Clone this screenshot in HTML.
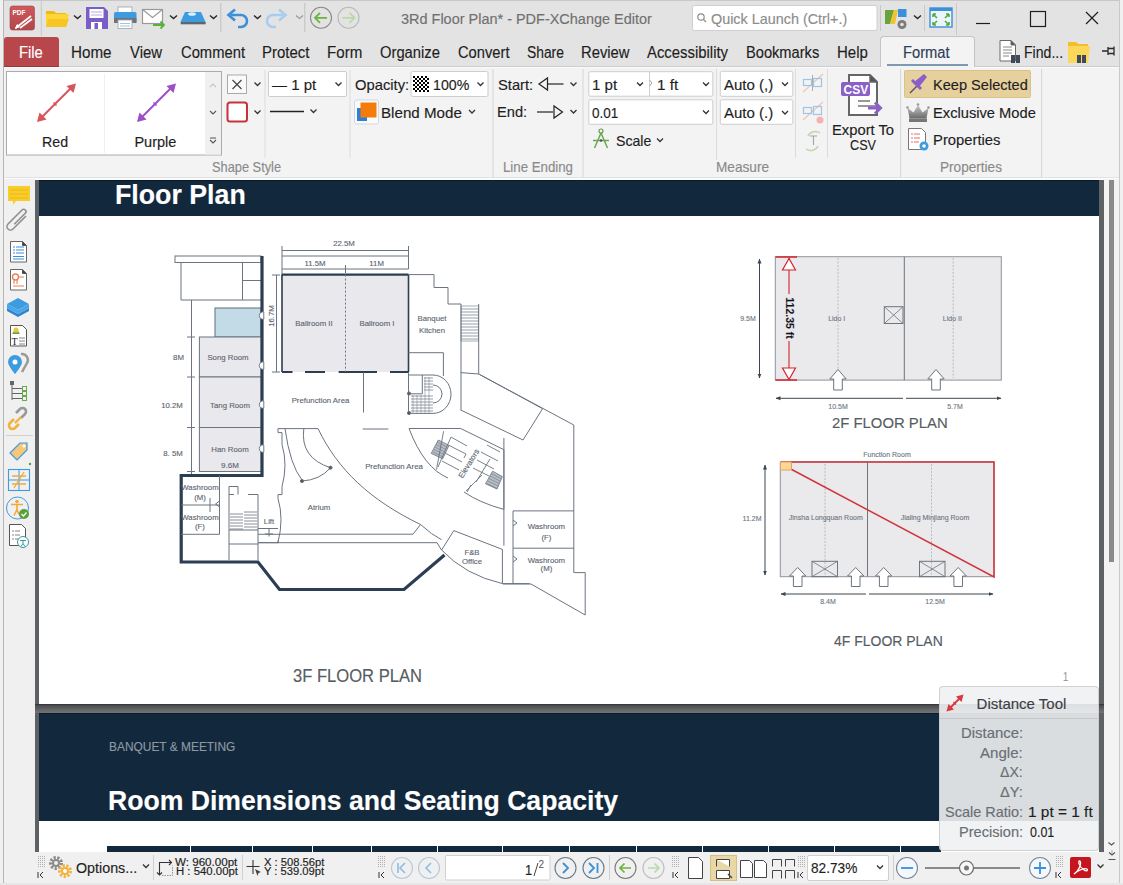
<!DOCTYPE html>
<html><head><meta charset="utf-8">
<style>
html,body{margin:0;padding:0;}
body{width:1123px;height:885px;position:relative;overflow:hidden;background:#f3f3f3;font-family:'Liberation Sans', sans-serif;}
.a{position:absolute;box-sizing:border-box;}
.t{position:absolute;white-space:pre;line-height:1;font-family:'Liberation Sans', sans-serif;-webkit-text-stroke:0.15px currentColor;}
svg{position:absolute;overflow:visible;}
</style></head><body>
<!-- title + tabs bar -->
<div class="a" style="left:0;top:0;width:1123px;height:67px;background:#e3e3e3;"></div>
<div class="a" style="left:0;top:0;width:1123px;height:1px;background:#c8c8c8;"></div>
<div class="a" style="left:0;top:66px;width:1123px;height:1px;background:#cdcdcd;"></div>
<!-- file button -->
<div class="a" style="left:4px;top:37px;width:55px;height:30px;background:#b7474b;border-radius:3px 3px 0 0;border-bottom:1.5px solid #8e3b3f;"></div>
<!-- format tab -->
<div class="a" style="left:880px;top:36px;width:95px;height:32px;background:#f3f3f3;border:1px solid #c4c4c4;border-bottom:none;border-radius:4px 4px 0 0;"></div>
<div class="a" style="left:887px;top:64px;width:81px;height:2px;background:#8099b3;"></div>
<!-- ribbon -->
<div class="a" style="left:0;top:67px;width:1123px;height:1px;background:#fafafa;"></div>
<div class="a" style="left:881px;top:67px;width:93px;height:1px;background:#f3f3f3;"></div>
<div class="a" style="left:0;top:68px;width:1123px;height:111px;background:#f3f3f3;"></div>
<div class="a" style="left:0;top:177px;width:1123px;height:1px;background:#e2e2e2;"></div><div class="a" style="left:0;top:178px;width:1123px;height:2px;background:#fbfbfb;"></div>
<!-- window borders -->
<div class="a" style="left:3px;top:0;width:1px;height:885px;background:#b5b5b5;"></div>
<div class="a" style="left:1119px;top:0;width:1px;height:885px;background:#c9c9c9;"></div>
<div class="a" style="left:0;top:0;width:3px;height:885px;background:#f0f0f0;"></div>
<div class="a" style="left:1120px;top:0;width:3px;height:885px;background:#f0f0f0;"></div>
<!-- left sidebar -->
<div class="a" style="left:4px;top:179px;width:31px;height:673px;background:#f0f0f0;"></div>
<div class="a" style="left:6px;top:435px;width:27px;height:1px;background:#d0d0d0;"></div>
<!-- view background -->
<div class="a" style="left:35px;top:180px;width:69px;height:672px;background:#5f6265;"></div>
<div class="a" style="left:35px;top:180px;width:1069px;height:672px;background:#5f6265;"></div>
<!-- scrollbar -->
<div class="a" style="left:1104px;top:179px;width:15px;height:673px;background:#f3f3f3;"></div>
<div class="a" style="left:1109px;top:180px;width:5px;height:382px;background:#8a8a8a;"></div>
<!-- page 1 -->
<div class="a" style="left:39px;top:180px;width:1060px;height:524px;background:#ffffff;"></div>
<div class="a" style="left:39px;top:180px;width:1060px;height:36px;background:#12283c;border-top:1px solid #0c1b29;"></div>
<div class="a" style="left:35px;top:704px;width:1069px;height:9px;background:linear-gradient(#383838 0,#383838 1px,#4a4d51 1.5px,#6c6c6c 7px,#6f7276 100%);"></div>
<!-- page 2 -->
<div class="a" style="left:39px;top:713px;width:1060px;height:139px;background:#ffffff;"></div>
<div class="a" style="left:39px;top:713px;width:1060px;height:108px;background:#12283c;border-top:1px solid #0e1c2a;"></div>
<div class="a" style="left:107px;top:846px;width:834px;height:6px;background:#12283c;"></div>
<!-- status bar -->
<div class="a" style="left:4px;top:852px;width:1115px;height:31px;background:#f0f0f0;"></div>
<div class="a" style="left:0;top:883px;width:1123px;height:2px;background:#e6e6e6;"></div>
<!-- app logo -->
<svg style="left:0;top:0" width="1123" height="67" viewBox="0 0 1123 67">
  <defs>
    <linearGradient id="lg1" x1="0" y1="0" x2="0" y2="1"><stop offset="0" stop-color="#d0575c"/><stop offset="1" stop-color="#b0474c"/></linearGradient>
  </defs>
  <rect x="10" y="6" width="24.5" height="24" rx="2.5" fill="url(#lg1)" stroke="#a34247" stroke-width="0.6"/>
  <text x="12.5" y="15" font-family="Liberation Sans" font-weight="bold" font-size="6.5" fill="#fff">PDF</text>
  <path d="M17 27 L31 16 M20 28 L32 19 M15.5 28.5 L18 25" stroke="#fff" stroke-width="1.6" fill="none"/>
  <path d="M15 29 l2 -5 l3 3 z" fill="#fff"/>
  <line x1="41.3" y1="1" x2="41.3" y2="36" stroke="#c7c7c7" stroke-width="1"/>
  <!-- folder -->
  <path d="M46 11 h8 l2 2 h10 v3 h-20 z" fill="#f0bb10"/>
  <path d="M46 14 h21 l2 0 l-3 13 h-20 z" fill="#fcd536"/>
  <path d="M48 19 h21 l-3 8 h-20 z" fill="#f7c622"/>
  <path d="M74 15.5 l3.5 3 l3.5 -3" stroke="#2a2a2a" stroke-width="1.5" fill="none"/>
  <!-- save -->
  <path d="M86 7 h18 l4 4 v18 h-22 z" fill="#7a5ec6"/>
  <rect x="89.5" y="9" width="14" height="9" fill="#fff"/>
  <path d="M91 12 h11 M91 15 h11" stroke="#b9a8e6" stroke-width="1"/>
  <rect x="91" y="22" width="11" height="7" fill="#fff"/>
  <rect x="94.5" y="23" width="3.5" height="6" fill="#7a5ec6"/>
  <!-- print -->
  <rect x="118" y="7" width="14" height="6" fill="#ffffff" stroke="#9aa3ad" stroke-width="0.8"/>
  <rect x="114" y="12" width="22.5" height="10" rx="1.5" fill="#3d9be0"/>
  <rect x="114" y="18" width="22.5" height="5" fill="#6d747c"/>
  <rect x="118" y="20" width="14" height="8.5" fill="#fff" stroke="#9aa3ad" stroke-width="0.8"/>
  <path d="M120 23.5 h10 M120 26 h10" stroke="#8fb6dc" stroke-width="0.8"/>
  <!-- mail -->
  <rect x="142.5" y="9.5" width="20" height="14" fill="#fff" stroke="#9a9a9a" stroke-width="1.2"/>
  <path d="M142.5 9.5 l10 8 l10 -8" stroke="#9a9a9a" stroke-width="1.2" fill="none"/>
  <path d="M153 25 h11 M160.5 21.5 l3.5 3.5 l-3.5 3.5" stroke="#58b13c" stroke-width="1.8" fill="none"/>
  <path d="M170 15.5 l3.5 3 l3.5 -3" stroke="#2a2a2a" stroke-width="1.5" fill="none"/>
  <!-- scanner -->
  <path d="M185 12 h16 l4.5 10 h-25 z" fill="#3d9be0"/>
  <ellipse cx="192" cy="14" rx="4" ry="1.8" fill="#d8efff"/>
  <rect x="180.7" y="22" width="25" height="2.3" fill="#5c6670"/>
  <path d="M210 15.5 l3.5 3 l3.5 -3" stroke="#2a2a2a" stroke-width="1.5" fill="none"/>
  <line x1="220.8" y1="3" x2="220.8" y2="32" stroke="#c0c0c0" stroke-width="1"/>
  <!-- undo -->
  <path d="M231 15 h10 a6 6 0 0 1 0 12 h-3" stroke="#3b8fdb" stroke-width="2.6" fill="none"/>
  <path d="M235 9.5 l-6.5 5.5 l6.5 5.5" stroke="#3b8fdb" stroke-width="2.6" fill="none"/>
  <path d="M254 15.5 l3.5 3 l3.5 -3" stroke="#2a2a2a" stroke-width="1.5" fill="none"/>
  <!-- redo -->
  <path d="M283 15 h-10 a6 6 0 0 0 0 12 h3" stroke="#a9cdef" stroke-width="2.6" fill="none"/>
  <path d="M279 9.5 l6.5 5.5 l-6.5 5.5" stroke="#a9cdef" stroke-width="2.6" fill="none"/>
  <path d="M296 15.5 l3.5 3 l3.5 -3" stroke="#9a9a9a" stroke-width="1.3" fill="none"/>
  <line x1="304.8" y1="3" x2="304.8" y2="32" stroke="#c0c0c0" stroke-width="1"/>
  <!-- nav circles -->
  <circle cx="321" cy="17.8" r="10.5" fill="none" stroke="#8a8a8a" stroke-width="1.1"/>
  <path d="M315 17.8 h12 M320 12.8 l-5 5 l5 5" stroke="#6cb33f" stroke-width="1.8" fill="none"/>
  <circle cx="348.5" cy="17.8" r="10.5" fill="none" stroke="#b9b9b9" stroke-width="1.1"/>
  <path d="M342.5 17.8 h12 M349.5 12.8 l5 5 l-5 5" stroke="#bcd8a8" stroke-width="1.8" fill="none"/>
  <!-- quick launch box -->
  <rect x="692.5" y="5.5" width="184.5" height="25" rx="2" fill="#ffffff" stroke="#cfcfcf" stroke-width="1"/>
  <circle cx="701" cy="17" r="3.2" fill="none" stroke="#8c8c8c" stroke-width="1.2"/>
  <path d="M703.3 19.3 l2.8 2.8" stroke="#8c8c8c" stroke-width="1.3"/>
  <line x1="880.5" y1="5" x2="880.5" y2="31" stroke="#c9c9c9" stroke-width="1"/>
  <!-- apps icon -->
  <path d="M885 10 h9 l-4 14 h-5 z" fill="#6aa33c"/>
  <path d="M894 10 h4 l-3 14 h-5 z" fill="#f2c331"/>
  <rect x="898" y="9" width="8.5" height="8" fill="#3a8fde"/>
  <circle cx="902" cy="24.5" r="4.5" fill="#7b7b7b"/>
  <circle cx="902" cy="24.5" r="1.8" fill="#e3e3e3"/>
  <path d="M914 15.5 l3.5 3 l3.5 -3" stroke="#2a2a2a" stroke-width="1.5" fill="none"/>
  <line x1="924.5" y1="5" x2="924.5" y2="31" stroke="#c9c9c9" stroke-width="1"/>
  <!-- fullscreen -->
  <rect x="930" y="8" width="22" height="19" fill="#eaf4fb" stroke="#3b8fdb" stroke-width="1.4"/>
  <rect x="930" y="8" width="22" height="3" fill="#3b8fdb"/>
  <path d="M933 14 l4 4 M933 14 h3 M933 14 v3 M949 14 l-4 4 M949 14 h-3 M949 14 v3 M933 25 l4 -4 M933 25 h3 M933 25 v-3 M949 25 l-4 -4 M949 25 h-3 M949 25 v-3" stroke="#5aa83a" stroke-width="1.6" fill="none"/>
  <line x1="956.5" y1="3" x2="956.5" y2="35" stroke="#c9c9c9" stroke-width="1"/>
  <!-- window controls -->
  <path d="M976 23.5 h14" stroke="#1e1e1e" stroke-width="1.2"/>
  <rect x="1030.5" y="11.5" width="15" height="15" fill="none" stroke="#1e1e1e" stroke-width="1.2"/>
  <path d="M1086 12 l12 12 M1098 12 l-12 12" stroke="#1e1e1e" stroke-width="1.2"/>
  <!-- find icon -->
  <path d="M1000 40.5 h11 l4.5 4.5 v16 h-15.5 z" fill="#fff" stroke="#6a6a6a" stroke-width="1"/>
  <path d="M1003 47 h9 M1003 50 h9 M1003 53 h9 M1003 56 h6" stroke="#7a7a7a" stroke-width="0.9"/>
  <path d="M1011 40.5 v4.5 h4.5" fill="#555" stroke="#6a6a6a" stroke-width="1"/>
  <rect x="1011" y="55" width="4" height="8" fill="#3e4a5a"/><rect x="1016" y="55" width="4" height="8" fill="#3e4a5a"/>
  <!-- folder find -->
  <path d="M1068 42 h8 l2 2 h10 v19 h-20 z" fill="#f3be2a"/>
  <path d="M1068 46 h22 l-2 17 h-20 z" fill="#fbd85a"/>
  <rect x="1077" y="55" width="4" height="8" fill="#3e4a5a"/><rect x="1082" y="55" width="4" height="8" fill="#3e4a5a"/>
  <!-- pin -->
  <path d="M1102 51 h6 M1108 47 v8 M1108 48.5 h6 v5 h-6 M1114 46.5 v9" stroke="#2a2a2a" stroke-width="1.3" fill="none"/>
</svg>
<svg style="left:0;top:67px" width="1123" height="112" viewBox="0 67 1123 112">
  <!-- gallery box -->
  <rect x="6.5" y="71.5" width="215" height="83.5" fill="#ffffff" stroke="#ababab" stroke-width="1"/>
  <rect x="205" y="72" width="16" height="82.5" fill="#f0f0f0"/>
  <line x1="104.5" y1="74" x2="104.5" y2="153" stroke="#f0f0f0" stroke-width="1"/>
  <path d="M210 87 l3 -3 l3 3" stroke="#c5c5c5" stroke-width="1.1" fill="none"/>
  <path d="M210 111 l3 3 l3 -3" stroke="#555" stroke-width="1.1" fill="none"/>
  <path d="M210 138 h6 M210 140 l3 3 l3 -3" stroke="#555" stroke-width="1.1" fill="none"/>
  <!-- red arrow -->
  <path d="M41 118 L72 87" stroke="#d9545a" stroke-width="2"/>
  <path d="M37 122 l9.5 -2.5 l-7 -7 z" fill="#d9545a"/>
  <path d="M76 83.5 l-9.5 2.5 l7 7 z" fill="#d9545a"/>
  <path d="M53.5 102.5 l3 3" stroke="#d9545a" stroke-width="1.6"/>
  <!-- purple arrow -->
  <path d="M141 118 L172 87" stroke="#9b4fc8" stroke-width="2"/>
  <path d="M137 122 l9.5 -2.5 l-7 -7 z" fill="#9b4fc8"/>
  <path d="M176 83.5 l-9.5 2.5 l7 7 z" fill="#9b4fc8"/>
  <path d="M153.5 102.5 l3 3" stroke="#9b4fc8" stroke-width="1.6"/>
  <!-- X button & red square -->
  <rect x="227.5" y="75" width="19" height="18.5" fill="#fafafa" stroke="#a9a9a9" stroke-width="1"/>
  <path d="M232.5 80 l9 9 M241.5 80 l-9 9" stroke="#444" stroke-width="1.2"/>
  <rect x="227.5" y="102.5" width="19.5" height="19" rx="2.5" fill="#fff" stroke="#c8333b" stroke-width="2"/>
  <path d="M254.5 82.5 l3 3 l3 -3 M254.5 110.5 l3 3 l3 -3" stroke="#333" stroke-width="1.3" fill="none"/>
  <line x1="265" y1="70" x2="265" y2="158" stroke="#dcdcdc" stroke-width="1"/>
  <!-- line width combo -->
  <rect x="268.5" y="71.5" width="78" height="25" rx="1.5" fill="#fff" stroke="#cdcdcd" stroke-width="1"/>
  <path d="M335.5 82.5 l3 3 l3 -3" stroke="#333" stroke-width="1.3" fill="none"/>
  <path d="M270 111.5 h34" stroke="#222" stroke-width="1.3"/>
  <path d="M310.5 109.5 l3 3 l3 -3" stroke="#333" stroke-width="1.3" fill="none"/>
  <line x1="350" y1="70" x2="350" y2="158" stroke="#dcdcdc" stroke-width="1"/>
  <!-- opacity combo -->
  <rect x="411" y="71.5" width="77" height="25" rx="1.5" fill="#fff" stroke="#cdcdcd" stroke-width="1"/>
  <path d="M477.5 82.5 l3 3 l3 -3 M469 110 l3 3 l3 -3" stroke="#333" stroke-width="1.3" fill="none"/>
  <!-- blend icon -->
  <rect x="354.5" y="100" width="24" height="24" rx="2" fill="#fafafa" stroke="#cfd7df" stroke-width="1"/>
  <rect x="357" y="108" width="10" height="13" fill="#2f7fd6"/>
  <rect x="360.5" y="102.5" width="16" height="15" fill="#f57c0a"/>
  <line x1="493" y1="69" x2="493" y2="178" stroke="#d6d6d6" stroke-width="1"/>
  <!-- line ending -->
  <path d="M539 84 l8.5 -6 v12 z" fill="none" stroke="#222" stroke-width="1.2"/>
  <path d="M547.5 84 h16" stroke="#222" stroke-width="1.2"/>
  <path d="M570.5 82.5 l3 3 l3 -3 M570.5 110 l3 3 l3 -3" stroke="#333" stroke-width="1.3" fill="none"/>
  <path d="M537 112 h16" stroke="#222" stroke-width="1.2"/>
  <path d="M562.5 112 l-8.5 -6 v12 z" fill="none" stroke="#222" stroke-width="1.2"/>
  <line x1="583" y1="69" x2="583" y2="178" stroke="#d6d6d6" stroke-width="1"/>
  <!-- measure combos -->
  <rect x="588.8" y="71.7" width="124" height="24.5" rx="1.5" fill="#fff" stroke="#cdcdcd" stroke-width="1"/>
  <path d="M649.5 72 v24" stroke="#d0d0d0" stroke-width="1"/>
  <path d="M649.5 80 l2.5 3 l-2.5 3" stroke="#999" stroke-width="0.9" fill="none"/>
  <path d="M637 82.5 l3 3 l3 -3 M703 82.5 l3 3 l3 -3" stroke="#333" stroke-width="1.3" fill="none"/>
  <rect x="588.8" y="99.8" width="124" height="24.5" rx="1.5" fill="#fff" stroke="#cdcdcd" stroke-width="1"/>
  <path d="M703 110.5 l3 3 l3 -3" stroke="#333" stroke-width="1.3" fill="none"/>
  <!-- scale icon -->
  <circle cx="601" cy="131" r="2" fill="none" stroke="#5a9a3c" stroke-width="1.1"/>
  <path d="M601 133 L594.5 148 M601 133 L607.5 148 M593 140.5 h16" stroke="#6aa84f" stroke-width="1.5" fill="none"/>
  <circle cx="601" cy="140.5" r="1.3" fill="#555"/>
  <path d="M657 138.5 l3 3 l3 -3" stroke="#333" stroke-width="1.3" fill="none"/>
  <line x1="716.5" y1="69" x2="716.5" y2="160" stroke="#dcdcdc" stroke-width="1"/>
  <!-- auto combos -->
  <rect x="720.3" y="71.3" width="72.5" height="25" rx="1.5" fill="#fff" stroke="#cdcdcd" stroke-width="1"/>
  <rect x="720.3" y="99.8" width="72.5" height="24.5" rx="1.5" fill="#fff" stroke="#cdcdcd" stroke-width="1"/>
  <path d="M782 82.5 l3 3 l3 -3 M782 111 l3 3 l3 -3" stroke="#333" stroke-width="1.3" fill="none"/>
  <line x1="795.5" y1="69" x2="795.5" y2="158" stroke="#dcdcdc" stroke-width="1"/>
  <!-- small disabled icons -->
  <g opacity="0.55">
    <path d="M803 92 l20 -18" stroke="#f0a080" stroke-width="1.2"/>
    <rect x="803.5" y="79.5" width="8" height="6" fill="none" stroke="#5aa0e0" stroke-width="1.2"/>
    <rect x="813.5" y="78.5" width="8" height="8" fill="none" stroke="#5aa0e0" stroke-width="1.2"/>
    <path d="M812.5 75 v16" stroke="#777" stroke-width="1"/>
    <path d="M803 120 l20 -18" stroke="#f0a080" stroke-width="1.2"/>
    <rect x="803.5" y="107.5" width="8" height="6" fill="none" stroke="#5aa0e0" stroke-width="1.2"/>
    <rect x="813.5" y="106.5" width="8" height="8" fill="none" stroke="#5aa0e0" stroke-width="1.2"/>
    <circle cx="820" cy="120" r="3.5" fill="#f08080"/>
    <path d="M808 136 a8 8 0 0 1 12 -3 M818 146 a8 8 0 0 1 -12 3" stroke="#90c070" stroke-width="1.5" fill="none"/>
    <path d="M810 136 h7 M813.5 136 v9" stroke="#666" stroke-width="1.1"/>
  </g>
  <line x1="827.5" y1="69" x2="827.5" y2="158" stroke="#dcdcdc" stroke-width="1"/>
  <!-- csv icon -->
  <path d="M849 75 h21 l7 7 v33 h-28 z" fill="#fff" stroke="#666" stroke-width="2"/>
  <path d="M870 75 v7 h7" fill="#555" stroke="#666" stroke-width="1.5"/>
  <rect x="841" y="82" width="29" height="14" rx="2" fill="#8a5fc8"/>
  <text x="843.5" y="94" font-family="Liberation Sans" font-weight="bold" font-size="12" fill="#fff">CSV</text>
  <path d="M858 101 h12 M858 106 h20" stroke="#777" stroke-width="1.5"/>
  <path d="M868 108 h12 M875 102.5 l5.5 5.5 l-5.5 5.5" stroke="#8a5fc8" stroke-width="3" fill="none"/>
  <line x1="900.6" y1="69" x2="900.6" y2="178" stroke="#d6d6d6" stroke-width="1"/>
  <!-- keep selected -->
  <rect x="904.5" y="70.5" width="126" height="27" rx="1" fill="#e6d19e" stroke="#d9c28a" stroke-width="1"/>
  <path d="M910 93 l7 -7" stroke="#5a4a7a" stroke-width="1.5"/>
  <path d="M914 82 l10 -8 l3 3 l-8 10 z" fill="#8a5fc8"/>
  <path d="M912 80 l9 9" stroke="#8a5fc8" stroke-width="3"/>
  <!-- crown -->
  <defs><linearGradient id="crg" x1="0" y1="0" x2="0" y2="1"><stop offset="0" stop-color="#c8c8c8"/><stop offset="1" stop-color="#6a6a6a"/></linearGradient></defs>
  <path d="M907.5 108 l6 4.5 l4.5 -7.5 l4.5 7.5 l6 -4.5 l-2 10.5 h-17 z" fill="url(#crg)"/>
  <circle cx="907.5" cy="107.5" r="1.3" fill="#999"/><circle cx="918" cy="104.5" r="1.3" fill="#999"/><circle cx="928.5" cy="107.5" r="1.3" fill="#999"/>
  <rect x="909" y="118.5" width="18" height="3.5" fill="#777"/>
  <!-- properties icon -->
  <path d="M908.5 128.5 h13 l4 4 v17 h-17 z" fill="#fff" stroke="#777" stroke-width="1"/>
  <path d="M911 134 h2 M914 134 h6 M911 138 h2 M914 138 h6 M911 142 h2 M914 142 h5" stroke="#e07060" stroke-width="1"/>
  <circle cx="924" cy="146" r="4.5" fill="#3d9be0"/>
  <circle cx="924" cy="146" r="1.8" fill="#fff"/>
  <line x1="1041.6" y1="69" x2="1041.6" y2="178" stroke="#d6d6d6" stroke-width="1"/>
</svg>
<svg style="left:413px;top:75.6px" width="16" height="16" viewBox="0 0 16 16">
  <defs><pattern id="chk" width="4" height="4" patternUnits="userSpaceOnUse"><rect x="0" y="0" width="2" height="2" fill="#000"/><rect x="2" y="2" width="2" height="2" fill="#000"/></pattern></defs>
  <rect width="16" height="16" fill="url(#chk)"/>
</svg>
<svg style="left:0;top:179px" width="40" height="380" viewBox="0 179 40 380">
  <!-- comment -->
  <path d="M8 186 h22 v15 h-14 l-3 4 v-4 h-5 z" fill="#f7cd2e"/>
  <path d="M10 190 h18 M10 194 h18 M10 198 h18" stroke="#f2b705" stroke-width="1.2"/>
  <!-- paperclip -->
  <path d="M26 216 l-13 13 a3.5 3.5 0 0 1 -5 -5 l14 -14 a2.3 2.3 0 0 1 3.3 3.3 l-11 11" stroke="#8f8f8f" stroke-width="1.6" fill="none"/>
  <!-- doc 1 -->
  <path d="M10.5 241.5 h12 l4 4 v16.5 h-16 z" fill="#fff" stroke="#666" stroke-width="1"/>
  <path d="M22.5 241.5 v4 h4" fill="#444" stroke="#555" stroke-width="1"/>
  <path d="M13 247 h2 M16 247 h8 M13 250 h2 M16 250 h8 M13 253 h2 M16 253 h8 M13 256.5 h11 M13 259 h11" stroke="#3b8fdb" stroke-width="1.2"/>
  <!-- doc 2 -->
  <path d="M10.5 269.5 h12 l4 4 v16.5 h-16 z" fill="#fff" stroke="#666" stroke-width="1"/>
  <path d="M22.5 269.5 v4 h4" fill="#444" stroke="#555" stroke-width="1"/>
  <circle cx="15.5" cy="277" r="3" fill="none" stroke="#e8805a" stroke-width="1.4"/>
  <path d="M14 280 v4 M17 280 v4 M19 277 h5 M13 286 h11" stroke="#e8805a" stroke-width="1.1"/>
  <!-- layers -->
  <path d="M7 304 l11 -6 l11 6 l-11 6 z" fill="#3d9be0"/>
  <path d="M7 308 l11 6 l11 -6 v3 l-11 6 l-11 -6 z" fill="#2a85d0"/>
  <path d="M7 304 v4 l11 6 l11 -6 v-4 l-11 6 z" fill="#4aa5e8"/>
  <!-- doc T -->
  <path d="M10.5 325.5 h12 l4 4 v16.5 h-16 z" fill="#fff" stroke="#555" stroke-width="1"/>
  <path d="M12 334 l4 -6 l4 6 z" fill="#6aa84f"/><circle cx="16" cy="330" r="2.5" fill="#f2c331"/>
  <text x="11.5" y="345" font-family="Liberation Serif" font-size="10" fill="#222">T</text>
  <path d="M19 338 h6 M19 341 h6 M19 344 h6" stroke="#777" stroke-width="0.9"/>
  <!-- location -->
  <path d="M21 354 a6 6 0 0 1 6 9 l-5 9" stroke="#9a9a9a" stroke-width="2.5" fill="none"/>
  <path d="M15 355 a7 7 0 0 1 7 7 c0 4 -7 12 -7 12 c0 0 -7 -8 -7 -12 a7 7 0 0 1 7 -7 z" fill="#3d9be0"/>
  <circle cx="15" cy="362" r="2.5" fill="#fff"/>
  <!-- tree -->
  <rect x="10" y="381" width="4" height="4" fill="#666"/>
  <path d="M12 385 v15 M12 388.5 h10 M12 393.5 h10 M12 398.5 h10" stroke="#666" stroke-width="1" fill="none"/>
  <rect x="22.5" y="386.5" width="4" height="4" fill="none" stroke="#6aa84f" stroke-width="1"/>
  <rect x="22.5" y="391.5" width="4" height="4" fill="none" stroke="#6aa84f" stroke-width="1"/>
  <rect x="22.5" y="396.5" width="4" height="4" fill="none" stroke="#6aa84f" stroke-width="1"/>
  <!-- link -->
  <path d="M14 419 l-4 4 a3.5 3.5 0 0 0 5 5 l4 -4" stroke="#f2b33d" stroke-width="2.6" fill="none"/>
  <path d="M21 418 l4 -4 a3.5 3.5 0 0 0 -5 -5 l-4 4" stroke="#999" stroke-width="2.6" fill="none"/>
  <path d="M15 423 l6 -6" stroke="#f2b33d" stroke-width="2.4"/>
  <!-- tag -->
  <path d="M10 453 l10 -10 h7 v7 l-10 10 z" fill="#f4c77a" stroke="#3d9be0" stroke-width="1.2"/>
  <circle cx="24" cy="446" r="1.5" fill="#fff"/>
  <circle cx="30" cy="464" r="1.2" fill="#58a03a"/>
  <!-- compare -->
  <rect x="8.5" y="469.5" width="21" height="21" fill="none" stroke="#3d9be0" stroke-width="1.1"/>
  <path d="M8.5 480 h21 M19 469.5 v21" stroke="#3d9be0" stroke-width="1"/>
  <path d="M12 476 h14 M12 484 h14 M24 472 l-10 16" stroke="#f2a93b" stroke-width="1.3"/>
  <!-- accessibility -->
  <circle cx="17.5" cy="508" r="11" fill="none" stroke="#3d9be0" stroke-width="1"/>
  <circle cx="17" cy="501.5" r="1.8" fill="#f2a93b"/>
  <path d="M11 504.5 h12 M17 504.5 v5 l-3 6 M17 509.5 l2 5" stroke="#f2a93b" stroke-width="1.6" fill="none"/>
  <circle cx="24" cy="514" r="5" fill="#58a03a"/>
  <path d="M21.5 514 l2 2 l3 -3.5" stroke="#fff" stroke-width="1.3" fill="none"/>
  <!-- acc doc -->
  <path d="M9.5 524.5 h12 l4 4 v17 h-16 z" fill="#fff" stroke="#555" stroke-width="1"/>
  <path d="M12 531 h2 M15 531 h5 M12 535 h2 M15 535 h5 M12 539 h2 M15 539 h5" stroke="#777" stroke-width="0.9"/>
  <circle cx="23" cy="542" r="5.5" fill="#fff" stroke="#3a9a9a" stroke-width="1"/>
  <path d="M20 540.5 h6 M23 540.5 v3 l-2 3 M23 543.5 l2 3" stroke="#3a9a9a" stroke-width="1" fill="none"/>
</svg>
<svg style="left:0;top:840px" width="1123" height="45" viewBox="0 840 1123 45">
  <defs>
    <pattern id="grip" width="2" height="2" patternUnits="userSpaceOnUse"><rect width="1" height="1" fill="#b0b0b0"/></pattern>
  </defs>
  <!-- table strip separators -->
  <path d="M190.5 846 v6 M252.5 846 v6 M312.5 846 v6 M371.5 846 v6 M437.5 846 v6 M502.5 846 v6 M569.5 846 v6 M636.5 846 v6 M702.5 846 v6 M768.5 846 v6 M834.5 846 v6 M900.5 846 v6" stroke="#ffffff" stroke-width="1"/>
  <!-- grips -->
  <rect x="37" y="856" width="8" height="12" fill="url(#grip)"/>
  <path d="M38 872 v6 M43 872 l-3 3 l3 3" stroke="#333" stroke-width="1" fill="none"/>
  <!-- gear icons -->
  <g transform="translate(56,863)">
    <circle r="5.5" fill="none" stroke="#8a8a8a" stroke-width="3" stroke-dasharray="2.2 1.6"/>
    <circle r="4" fill="#8a8a8a"/><circle r="2" fill="#f0f0f0"/>
  </g>
  <g transform="translate(65,871)">
    <circle r="5.5" fill="none" stroke="#f2b33d" stroke-width="3" stroke-dasharray="2.2 1.6"/>
    <circle r="4" fill="#f2b33d"/><circle r="2" fill="#fff"/>
  </g>
  <path d="M143 864.5 l3 3 l3 -3" stroke="#333" stroke-width="1.3" fill="none"/>
  <line x1="153.5" y1="855" x2="153.5" y2="880" stroke="#d0d0d0"/>
  <!-- size icon -->
  <path d="M159.5 875 v-12.5 h12 M169 860 l2.5 2.5 l-2.5 2.5 M157 872.5 l2.5 2.5 l2.5 -2.5" stroke="#333" stroke-width="1.1" fill="none"/>
  <path d="M162 875.5 h10.5 v-10" stroke="#888" stroke-width="0.9" stroke-dasharray="1.5 1" fill="none"/>
  <line x1="242.5" y1="855" x2="242.5" y2="880" stroke="#d0d0d0"/>
  <!-- cross icon -->
  <path d="M246.5 866.5 h13 M253 860 v14" stroke="#333" stroke-width="1.1"/>
  <path d="M255 869 l6 3 l-2.5 1 l-1 3 z" fill="#444"/>
  <!-- nav -->
  <rect x="378" y="856" width="8" height="12" fill="url(#grip)"/>
  <path d="M379 872 v6 M384 872 l-3 3 l3 3" stroke="#333" stroke-width="1" fill="none"/>
  <circle cx="402" cy="868" r="10.5" fill="none" stroke="#b8c8d8" stroke-width="1.1"/>
  <path d="M398 863 v10 M405 863 l-5 5 l5 5" stroke="#8cbde8" stroke-width="1.6" fill="none"/>
  <circle cx="429" cy="868" r="10.5" fill="none" stroke="#b8c8d8" stroke-width="1.1"/>
  <path d="M431 863 l-5 5 l5 5" stroke="#8cbde8" stroke-width="1.6" fill="none"/>
  <rect x="445.5" y="855.5" width="104.5" height="24.5" rx="1.5" fill="#fff" stroke="#cfcfcf"/>
  <path d="M534 876 l4 -13" stroke="#444" stroke-width="1"/>
  <text x="538.5" y="868" font-family="Liberation Sans" font-size="10" fill="#555">2</text>
  <circle cx="565.5" cy="868" r="10.5" fill="none" stroke="#6a7a8a" stroke-width="1.1"/>
  <path d="M563 863 l5 5 l-5 5" stroke="#3b8fdb" stroke-width="1.8" fill="none"/>
  <circle cx="593.5" cy="868" r="10.5" fill="none" stroke="#6a7a8a" stroke-width="1.1"/>
  <path d="M589 863 l5 5 l-5 5 M597.5 863 v10" stroke="#3b8fdb" stroke-width="1.8" fill="none"/>
  <line x1="609.5" y1="855" x2="609.5" y2="880" stroke="#d0d0d0"/>
  <circle cx="625.5" cy="868" r="10.5" fill="none" stroke="#7a7a7a" stroke-width="1.1"/>
  <path d="M620 868 h11 M624.5 863.5 l-4.5 4.5 l4.5 4.5" stroke="#6cb33f" stroke-width="1.7" fill="none"/>
  <circle cx="653.5" cy="868" r="10.5" fill="none" stroke="#bdbdbd" stroke-width="1.1"/>
  <path d="M648 868 h11 M654.5 863.5 l4.5 4.5 l-4.5 4.5" stroke="#bcd8a8" stroke-width="1.7" fill="none"/>
  <rect x="672" y="856" width="8" height="12" fill="url(#grip)"/>
  <path d="M673 872 v6 M678 872 l-3 3 l3 3" stroke="#333" stroke-width="1" fill="none"/>
  <!-- page view buttons -->
  <path d="M688.5 857.5 h10 l4 4 v17 h-14 z" fill="#fff" stroke="#444" stroke-width="1"/>
  <rect x="710.5" y="855.5" width="26" height="25" fill="#ead7a6" stroke="#d6be86"/>
  <path d="M716.5 859.5 h13 v7 M716.5 859.5 v7 M716.5 870.5 h13 v8 h-13 z" fill="#fff" stroke="#444" stroke-width="1"/>
  <path d="M728 874 l4 4" stroke="#444" stroke-width="1.5"/>
  <path d="M740.5 860.5 h9 l3 3 v14 h-12 z M754.5 860.5 h9 l3 3 v14 h-12 z" fill="#fff" stroke="#444" stroke-width="1"/>
  <path d="M772.5 859.5 h9 v7 M772.5 859.5 v7 M785.5 859.5 h9 v7 M785.5 859.5 v7 M772.5 870.5 h9 v8 M772.5 870.5 v8 M785.5 870.5 h9 v8 M785.5 870.5 v8" fill="none" stroke="#444" stroke-width="1"/>
  <rect x="797" y="856" width="8" height="12" fill="url(#grip)"/>
  <path d="M798 872 v6 M803 872 l-3 3 l3 3" stroke="#333" stroke-width="1" fill="none"/>
  <rect x="807.5" y="855.5" width="81" height="25" rx="1.5" fill="#fff" stroke="#cfcfcf"/>
  <path d="M877 865.5 l3 3 l3 -3" stroke="#333" stroke-width="1.3" fill="none"/>
  <line x1="893.5" y1="855" x2="893.5" y2="880" stroke="#d0d0d0"/>
  <circle cx="907" cy="868" r="10.5" fill="#f4f8fc" stroke="#7a8a9a" stroke-width="1.1"/>
  <path d="M901 868 h12" stroke="#3b8fdb" stroke-width="1.8"/>
  <path d="M925 868 h95" stroke="#8a8a8a" stroke-width="2"/>
  <circle cx="966.5" cy="868" r="7" fill="#f8f8f8" stroke="#666" stroke-width="1.2"/>
  <circle cx="966.5" cy="868" r="2.5" fill="#777"/>
  <circle cx="1040" cy="868" r="10.5" fill="#f4f8fc" stroke="#7a8a9a" stroke-width="1.1"/>
  <path d="M1034 868 h12 M1040 862 v12" stroke="#3b8fdb" stroke-width="1.8"/>
  <rect x="1055" y="856" width="8" height="12" fill="url(#grip)"/>
  <path d="M1056 872 v6 M1061 872 l-3 3 l3 3" stroke="#333" stroke-width="1" fill="none"/>
  <rect x="1070" y="857" width="21" height="21" rx="2" fill="#c4161c"/>
  <path d="M1074 874 c4 -2 8 -10 6 -13 c-2 -1 -2 5 4 9 c3 2 4 0 3 -1 c-3 -1 -9 1 -13 5z" fill="none" stroke="#fff" stroke-width="1.3"/>
  <path d="M1097.5 864.5 l3 3 l3 -3" stroke="#333" stroke-width="1.3" fill="none"/>
  <!-- scroll chevrons -->
  <path d="M1108.5 842.5 l3 2.5 l3 -2.5" stroke="#555" stroke-width="1.1" fill="none"/>
  <path d="M1109 852.5 l3 2.5 l3 -2.5 M1108.5 859.5 h7" stroke="#555" stroke-width="1.1" fill="none"/>
  <path d="M1112 850 v4" stroke="#999" stroke-width="0.8"/>
</svg>
<div class="a" style="left:938.5px;top:686px;width:160px;height:165px;background:rgba(240,241,242,0.9);border:1px solid rgba(200,200,200,0.8);border-radius:4px;"></div>
<div class="a" style="left:939px;top:718px;width:159px;height:1px;background:#c5c7c9;"></div>
<svg style="left:940px;top:690px" width="30" height="30" viewBox="940 690 30 30">
  <path d="M950 708 l10 -10" stroke="#d9383e" stroke-width="1.8"/>
  <path d="M946.5 711.5 l7.5 -2 l-5.5 -5.5 z M963.5 694.5 l-7.5 2 l5.5 5.5 z" fill="#d9383e"/>
  <path d="M953.5 702 l2.5 2.5" stroke="#d9383e" stroke-width="1.3"/>
</svg>
<svg style="left:0;top:0" width="1123" height="885" viewBox="0 0 1123 885">
<g font-family="Liberation Sans" fill="none" stroke="#6b7480" stroke-width="1">
  <!-- top-left building -->
  <rect x="175" y="256" width="86" height="6.5"/>
  <path d="M181 262.5 V300 H261 M242.5 262.5 V300 M242.5 280.5 H261"/>
  <!-- blue room -->
  <rect x="215" y="308" width="46" height="29" fill="#c3dbe6" stroke="#5f6f7d"/>
  <!-- small rooms -->
  <rect x="199.4" y="337" width="62" height="40" fill="#e9e8ec" stroke="#6b7480"/>
  <rect x="199.4" y="377" width="62" height="50.5" fill="#e9e8ec" stroke="#6b7480"/>
  <rect x="199.4" y="427.5" width="62" height="44" fill="#e9e8ec" stroke="#6b7480"/>
  <!-- left dim line -->
  <path d="M191.5 300 V474 M187 337 h8 M187 377 h8 M187 427.5 h8 M187 471.5 h8"/>
  <!-- thick wall -->
  <path d="M262 256 V475.5 H181.2 V562 H258 L279.5 589.5 H404 L444.5 555" stroke="#2c3e52" stroke-width="3.2"/>
  <!-- door notches on wall -->
  <g stroke="#6b7480" fill="#fff" stroke-width="0.9">
    <path d="M263.8 312 a3.6 3.6 0 0 0 -4.5 3.6 a3.6 3.6 0 0 0 4.5 3.6 z"/>
    <path d="M263.8 362 a3.6 3.6 0 0 0 -4.5 3.6 a3.6 3.6 0 0 0 4.5 3.6 z"/>
    <path d="M263.8 401 a3.6 3.6 0 0 0 -4.5 3.6 a3.6 3.6 0 0 0 4.5 3.6 z"/>
    <path d="M263.8 445 a3.6 3.6 0 0 0 -4.5 3.6 a3.6 3.6 0 0 0 4.5 3.6 z"/>
  </g>
  <!-- washrooms left -->
  <path d="M219.5 475.5 V534.3 H181.2 M181.2 505 H219.5 M210 498 v14" />
  <path d="M219.5 501 l-4 3 l4 3" />
  <!-- stairs / lift area -->
  <path d="M229 486.5 V560 M229 486.5 h9 M238 486.5 v8 M248 494.5 h10 M229 494.5 h5 M258 494.5 V560 M229 544 h29 M229 530 h29"/>
  <path d="M230 514 h13 M230 517 h13 M230 520 h13 M230 523 h13 M230 526 h13 M230 529 h13 M244 512 h13 M244 515 h13 M244 518 h13 M244 521 h13 M244 524 h13 M244 527 h13" stroke-width="0.8"/>
  <path d="M258 528.5 h20 M269 528.5 v8 M265 534 h8 M258 534.3 h21 M258 542.7 h21"/>
  <!-- dims above ballroom -->
  <path d="M282 250.5 H408.5 M282 246 v34 M408.5 246 v10 M282 256 H408.5 V269 M282 269 H408.5 M345.5 265 v8"/>
  <!-- 16.7M dim -->
  <path d="M276.5 275 V372 M272 275 h8 M272 372 h8"/>
  <!-- ballroom -->
  <rect x="282" y="274.6" width="126.5" height="97.4" fill="#e9e8ec" stroke="none"/>
  <path d="M282 274.6 H408.5" stroke="#2c3e52" stroke-width="2.2"/><path d="M282 372 V274.6 M408.5 274.6 V372" stroke="#2c3e52" stroke-width="1.6"/>
  <path d="M282 372 H292.5 M305 372 H325 M338.7 372 H377 M390 372 H408.5" stroke="#2c3e52" stroke-width="2"/>
  <path d="M345.5 274.6 V372" stroke-dasharray="2 2"/>
  <!-- kitchen outline -->
  <path d="M408.5 274.6 H434 V287.5 H448 V304 H461 V410 M478.7 304 V374 M408.5 352.7 H443.4 V376 M408.5 372 V413.4"/>
  <rect x="461" y="306" width="17.7" height="35" stroke-width="0.6"/>
  <path d="M461 309 h17.7 M461 312 h17.7 M461 315 h17.7 M461 318 h17.7 M461 321 h17.7 M461 324 h17.7 M461 327 h17.7 M461 330 h17.7 M461 333 h17.7 M461 336 h17.7 M461 339 h17.7" stroke-width="0.7"/>
  <!-- spiral stairs -->
  <path d="M408.6 375 H433 M422.3 375 V393.8 H409.8 M409.8 413.4 H433"/>
  <path d="M433 375 A18 19.2 0 0 1 433 413.4"/>
  <path d="M433 385 A9 9 0 0 1 433 403"/>
  <path d="M411 396 h22 M411 399 h22 M411 402 h22 M411 405 h22 M411 408 h22 M411 411 h22 M424 378 h9 M424 381 h9 M424 384 h9 M424 387 h9 M424 390 h9" stroke-width="0.7"/>
  <path d="M413 395 v18 M417 395 v18 M421 395 v18 M425 377 v36 M429 377 v36" stroke-width="0.5"/>
  <circle cx="409" cy="393.5" r="1.6" fill="#555"/><circle cx="409" cy="413" r="1.6" fill="#555"/>
  <!-- prefunction lines -->
  <path d="M363.5 372.5 V412.5 M362.6 429 H388.4"/>
  <!-- right building diagonal block -->
  <path d="M460.7 372.6 L478.7 374 L542.6 408.7 L523 440 L460.7 410"/>
  <path d="M478.7 374 L573.8 425 V572.6 H585.2 V615 L531 584 H503"/>
  <!-- elevator wedge -->
  <path d="M409 428.5 H460.7 L503.9 449.7 V509.4 M409 428.5 Q424 468 448 478 M464 492 Q480 503 503.9 509.4"/>
  <path d="M438.3 440 L449 445.4 L442.7 458.8 L431.2 453.4 z" fill="#b9bec4" stroke-width="0.8"/>
  <path d="M437 442 l10 5 M436 444.5 l10 5 M435 447 l10 5 M434 449.5 l10 5 M433 452 l10 5" stroke-width="0.6"/>
  <path d="M492.6 471.2 L502.4 476.6 L497 489 L485.5 483.7 z" fill="#b9bec4" stroke-width="0.8"/>
  <path d="M491 473.5 l10 5 M490 476 l10 5 M489 478.5 l10 5 M488 481 l10 5 M487 483.5 l10 5" stroke-width="0.6"/>
  <path d="M443.6 431.2 L436.5 469.5 M451 437 L467 446 M449 445.4 L466 454 M445 453 L462 462 M442 461 L459 470 M451 437 L438 467 M466 454 l-2 4" stroke-width="0.9"/>
  <path d="M487 445 L500 452 M481 452 L498 461 M477 460 L494 469 M473 468 L489 476 M482 475 L466 491 M490 459 l-14 23 M471 485 l-4 7" stroke-width="0.9"/>
  <!-- atrium -->
  <path d="M278 428.6 H318 C338 470, 370 500, 420.5 524.5 Q432 535 441.6 539.7"/>
  <path d="M278 428.6 v4 h4 v12 q6 20 0 42 v8 h-4 v4 q6 20 0 44 v-2"/>
  <path d="M285 428.6 Q290 465 302 480"/>
  <path d="M303.8 428.6 Q300 458 330.5 467.7"/>
  <path d="M330.5 467.7 Q320 480 302 481"/>
  <circle cx="330.5" cy="467.7" r="1.6" fill="#555"/><circle cx="302" cy="481" r="1.6" fill="#555"/>
  <path d="M279.7 534.2 H413 L420.5 524.5 M258 542.7 H437 L441.6 550.2"/>
  <!-- F&B office -->
  <path d="M453.8 530.6 L502.4 549.4 V583.6 M453.8 530.6 L441.6 550 Q465 575 502.4 583.6 H529.5"/>
  <path d="M503.9 438 V545.7"/>
  <!-- washrooms right -->
  <path d="M513 510.9 H573.8 M513 548.2 H573.8 M513 510.9 V584"/>
  <path d="M513 520 l4 3 l-4 3 M513 556 l4 3 l-4 3"/>
</g>
<g font-family="Liberation Sans" fill="#5c6570" font-size="7.8" text-anchor="middle" stroke="#5c6570" stroke-width="0.12">
  <text x="344" y="246">22.5M</text>
  <text x="315" y="266">11.5M</text>
  <text x="376.6" y="266">11M</text>
  <text x="314" y="325.5">Ballroom II</text>
  <text x="377" y="325.5">Ballroom I</text>
  <text x="432" y="321">Banquet</text>
  <text x="432" y="333">Kitchen</text>
  <text x="228" y="360">Song Room</text>
  <text x="230" y="407.5">Tang Room</text>
  <text x="230" y="452">Han Room</text>
  <text x="230" y="468" font-size="8">9.6M</text>
  <text x="178.5" y="360">8M</text>
  <text x="172" y="408">10.2M</text>
  <text x="173" y="456">8. 5M</text>
  <text x="320.5" y="402.5">Prefunction Area</text>
  <text x="394" y="468.5">Prefunction Area</text>
  <text x="319" y="510">Atrium</text>
  <text x="269" y="524">Lift</text>
  <text x="200" y="490">Washroom</text>
  <text x="200" y="500">(M)</text>
  <text x="200" y="520">Washroom</text>
  <text x="200" y="529">(F)</text>
  <text x="472" y="554.5">F&amp;B</text>
  <text x="472" y="564">Office</text>
  <text x="546.4" y="529">Washroom</text>
  <text x="546.4" y="539.5">(F)</text>
  <text x="546.4" y="562.5">Washroom</text>
  <text x="546.4" y="571">(M)</text>
  <text x="0" y="0" transform="translate(273.5 316) rotate(-90)">16.7M</text>
  <text x="0" y="0" transform="translate(471 465) rotate(-58)">Elevators</text>
</g>
</svg>
<svg style="left:0;top:0" width="1123" height="885" viewBox="0 0 1123 885">
<defs>
  <marker id="ah" viewBox="0 0 10 10" refX="9" refY="5" markerWidth="5" markerHeight="5" orient="auto-start-reverse"><path d="M0 1 L10 5 L0 9 z" fill="#3c4650"/></marker>
</defs>
<g fill="none" stroke="#7d848c" stroke-width="1">
  <!-- 2F -->
  <rect x="775.3" y="256.7" width="226" height="123.4" fill="#eae9eb" stroke="#8e949b"/>
  <path d="M904.3 256.7 V380.1" stroke="#6d747c"/>
  <path d="M838 258 V378 M953.2 258 V378" stroke="#b9bcc0" stroke-dasharray="2 1.5"/>
  <rect x="884.3" y="306.7" width="18.7" height="16.8" stroke="#6d747c"/>
  <path d="M884.3 306.7 L903 323.5 M903 306.7 L884.3 323.5" stroke="#6d747c" stroke-width="0.8"/>
  <path d="M759.5 259 V378" stroke="#3c4650" marker-start="url(#ah)" marker-end="url(#ah)"/>
  <path d="M776 398.3 H903 M906 398.3 H1001" stroke="#3c4650" marker-start="url(#ah)" marker-end="url(#ah)"/>
  <path d="M833.7 390.0 V379.0 h-3.9 L838.0 369.5 L846.2 379.0 h-3.9 V390.0 z" fill="#fff" stroke="#6d747c"/>
  <path d="M931.7 390.0 V379.0 h-3.9 L936.0 369.5 L944.2 379.0 h-3.9 V390.0 z" fill="#fff" stroke="#6d747c"/>
  <!-- red measure 2F -->
  <path d="M775.5 257 H797 M775.5 380 H797" stroke="#d4242c" stroke-width="1.6"/>
  <path d="M789 258 V380" stroke="#d4242c" stroke-width="1.1"/>
  <path d="M789 258.5 L782.5 270 H795.5 z M789 379.5 L782.5 368 H795.5 z" fill="#fff" stroke="#d4242c" stroke-width="1.2"/>
  <rect x="783" y="294" width="12" height="47" fill="#e9e8ec" stroke="none"/>
  <!-- 4F -->
  <rect x="780.3" y="461.9" width="213.7" height="114.8" fill="#eae9eb" stroke="#8e949b"/>
  <path d="M867.5 462 V576.7" stroke="#6d747c"/>
  <path d="M825 464 V575 M931.5 464 V575" stroke="#b9bcc0" stroke-dasharray="2 1.5"/>
  <rect x="812" y="561.3" width="25.5" height="15.4" stroke="#6d747c"/>
  <path d="M812 561.3 L837.5 576.7 M837.5 561.3 L812 576.7" stroke="#6d747c" stroke-width="0.8"/>
  <rect x="919.5" y="561.3" width="25.5" height="15.4" stroke="#6d747c"/>
  <path d="M919.5 561.3 L945 576.7 M945 561.3 L919.5 576.7" stroke="#6d747c" stroke-width="0.8"/>
  <path d="M765 465 V575" stroke="#3c4650" marker-start="url(#ah)" marker-end="url(#ah)"/>
  <path d="M781 594 H866 M869 594 H993" stroke="#3c4650" marker-start="url(#ah)" marker-end="url(#ah)"/>
  <path d="M793.4000000000001 586.5 V576.0 h-3.9 L797.7 567.5 L805.9000000000001 576.0 h-3.9 V586.5 z" fill="#fff" stroke="#6d747c"/>
  <path d="M851.4000000000001 586.5 V576.0 h-3.9 L855.7 567.5 L863.9000000000001 576.0 h-3.9 V586.5 z" fill="#fff" stroke="#6d747c"/>
  <path d="M879.4000000000001 586.5 V576.0 h-3.9 L883.7 567.5 L891.9000000000001 576.0 h-3.9 V586.5 z" fill="#fff" stroke="#6d747c"/>
  <path d="M953.9000000000001 586.5 V576.0 h-3.9 L958.2 567.5 L966.4000000000001 576.0 h-3.9 V586.5 z" fill="#fff" stroke="#6d747c"/>
  <!-- red 4F -->
  <path d="M781 462 H994 V577 L787 467" stroke="#d0343c" stroke-width="1.5"/>
  <rect x="780.5" y="462" width="11" height="8" rx="1" fill="#fbd898" stroke="#e8a060" stroke-width="1"/>
</g>
<g font-family="Liberation Sans" fill="#6a7480" font-size="7" text-anchor="middle" stroke="#6a7480" stroke-width="0.1">
  <text x="748" y="321">9.5M</text>
  <text x="836.7" y="320.5">Lido I</text>
  <text x="952.4" y="320.5">Lido II</text>
  <text x="838" y="409">10.5M</text>
  <text x="955" y="409">5.7M</text>
  <text x="887" y="457">Function Room</text>
  <text x="752" y="521">11.2M</text>
  <text x="825.8" y="519.5">Jinsha Longquan Room</text>
  <text x="935" y="519.5">Jialing Minjiang Room</text>
  <text x="828" y="604">8.4M</text>
  <text x="935" y="604">12.5M</text>
  <text x="0" y="0" transform="translate(785.5 318) rotate(90)" fill="#111" font-size="10.5" font-weight="bold">112.35 ft</text>
</g>
</svg>

<span class="t" style="left:401.20px;top:11.00px;font-size:15.5px;color:#707070;transform:scaleX(0.9333);transform-origin:0 0;">3Rd Floor Plan* - PDF-XChange Editor</span>
<span class="t" style="left:711.40px;top:11.00px;font-size:15.0px;color:#8c8c8c;transform:scaleX(0.9582);transform-origin:0 0;">Quick Launch (Ctrl+.)</span>
<span class="t" style="left:19.08px;top:45.00px;font-size:16.0px;color:#ffffff;transform:scaleX(0.9243);transform-origin:0 0;">File</span>
<span class="t" style="left:71.05px;top:45.00px;font-size:16.0px;color:#1e1e1e;transform:scaleX(0.9502);transform-origin:0 0;">Home</span>
<span class="t" style="left:130.00px;top:45.00px;font-size:16.0px;color:#1e1e1e;transform:scaleX(0.9329);transform-origin:0 0;">View</span>
<span class="t" style="left:180.50px;top:45.00px;font-size:16.0px;color:#1e1e1e;transform:scaleX(0.9227);transform-origin:0 0;">Comment</span>
<span class="t" style="left:262.06px;top:45.00px;font-size:16.0px;color:#1e1e1e;transform:scaleX(0.9355);transform-origin:0 0;">Protect</span>
<span class="t" style="left:327.06px;top:45.00px;font-size:16.0px;color:#1e1e1e;transform:scaleX(0.9444);transform-origin:0 0;">Form</span>
<span class="t" style="left:380.00px;top:45.00px;font-size:16.0px;color:#1e1e1e;transform:scaleX(0.9227);transform-origin:0 0;">Organize</span>
<span class="t" style="left:458.00px;top:45.00px;font-size:16.0px;color:#1e1e1e;transform:scaleX(0.9191);transform-origin:0 0;">Convert</span>
<span class="t" style="left:527.00px;top:45.00px;font-size:16.0px;color:#1e1e1e;transform:scaleX(0.8645);transform-origin:0 0;">Share</span>
<span class="t" style="left:581.08px;top:45.00px;font-size:16.0px;color:#1e1e1e;transform:scaleX(0.9247);transform-origin:0 0;">Review</span>
<span class="t" style="left:647.00px;top:45.00px;font-size:16.0px;color:#1e1e1e;transform:scaleX(0.9296);transform-origin:0 0;">Accessibility</span>
<span class="t" style="left:745.79px;top:45.00px;font-size:16.0px;color:#1e1e1e;transform:scaleX(0.9149);transform-origin:0 0;">Bookmarks</span>
<span class="t" style="left:837.06px;top:45.00px;font-size:16.0px;color:#1e1e1e;transform:scaleX(0.9373);transform-origin:0 0;">Help</span>
<span class="t" style="left:902.88px;top:45.00px;font-size:16.0px;color:#2c3e58;transform:scaleX(0.9198);transform-origin:0 0;">Format</span>
<span class="t" style="left:1024.12px;top:45.00px;font-size:16.0px;color:#1e1e1e;transform:scaleX(0.8806);transform-origin:0 0;">Find...</span>
<span class="t" style="left:42.42px;top:135.00px;font-size:14.5px;color:#1e1e1e;transform:scaleX(0.9790);transform-origin:0 0;">Red</span>
<span class="t" style="left:134.40px;top:135.00px;font-size:14.5px;color:#1e1e1e;transform-origin:0 0;">Purple</span>
<span class="t" style="left:212.00px;top:160.00px;font-size:14.5px;color:#8a8a8a;transform:scaleX(0.8832);transform-origin:0 0;">Shape Style</span>
<span class="t" style="left:272.00px;top:77.00px;font-size:15.0px;color:#1e1e1e;transform-origin:0 0;">— 1 pt</span>
<span class="t" style="left:354.50px;top:77.00px;font-size:15.0px;color:#1e1e1e;transform:scaleX(0.9842);transform-origin:0 0;">Opacity:</span>
<span class="t" style="left:433.05px;top:77.00px;font-size:15.0px;color:#1e1e1e;transform:scaleX(0.9453);transform-origin:0 0;">100%</span>
<span class="t" style="left:381.49px;top:105.00px;font-size:15.0px;color:#1e1e1e;transform:scaleX(1.0100);transform-origin:0 0;">Blend Mode</span>
<span class="t" style="left:498.00px;top:77.00px;font-size:15.0px;color:#1e1e1e;transform:scaleX(0.9805);transform-origin:0 0;">Start:</span>
<span class="t" style="left:497.02px;top:104.00px;font-size:15.0px;color:#1e1e1e;transform:scaleX(0.9760);transform-origin:0 0;">End:</span>
<span class="t" style="left:503.09px;top:160.00px;font-size:14.5px;color:#8a8a8a;transform:scaleX(0.9136);transform-origin:0 0;">Line Ending</span>
<span class="t" style="left:591.99px;top:77.00px;font-size:15.0px;color:#1e1e1e;transform:scaleX(1.0060);transform-origin:0 0;">1 pt</span>
<span class="t" style="left:656.98px;top:77.00px;font-size:15.0px;color:#1e1e1e;transform:scaleX(1.0156);transform-origin:0 0;">1 ft</span>
<span class="t" style="left:592.00px;top:105.00px;font-size:15.0px;color:#1e1e1e;transform:scaleX(0.9011);transform-origin:0 0;">0.01</span>
<span class="t" style="left:616.00px;top:133.00px;font-size:15.0px;color:#1e1e1e;transform:scaleX(0.9414);transform-origin:0 0;">Scale</span>
<span class="t" style="left:724.00px;top:77.00px;font-size:15.0px;color:#1e1e1e;transform-origin:0 0;">Auto (,)</span>
<span class="t" style="left:724.00px;top:105.00px;font-size:15.0px;color:#1e1e1e;transform-origin:0 0;">Auto (.)</span>
<span class="t" style="left:715.86px;top:160.00px;font-size:14.5px;color:#8a8a8a;transform:scaleX(0.9395);transform-origin:0 0;">Measure</span>
<span class="t" style="left:832.02px;top:122.00px;font-size:15.0px;color:#1e1e1e;transform:scaleX(0.9836);transform-origin:0 0;">Export To</span>
<span class="t" style="left:850.00px;top:137.00px;font-size:15.0px;color:#1e1e1e;transform:scaleX(0.8431);transform-origin:0 0;">CSV</span>
<span class="t" style="left:932.53px;top:77.00px;font-size:15.0px;color:#1e1e1e;transform:scaleX(0.9716);transform-origin:0 0;">Keep Selected</span>
<span class="t" style="left:932.52px;top:105.00px;font-size:15.0px;color:#1e1e1e;transform:scaleX(0.9788);transform-origin:0 0;">Exclusive Mode</span>
<span class="t" style="left:932.51px;top:132.00px;font-size:15.0px;color:#1e1e1e;transform:scaleX(0.9871);transform-origin:0 0;">Properties</span>
<span class="t" style="left:939.76px;top:160.00px;font-size:14.5px;color:#8a8a8a;transform:scaleX(0.9378);transform-origin:0 0;">Properties</span>
<span class="t" style="left:114.56px;top:180.00px;font-size:28.5px;color:#ffffff;font-weight:bold;transform:scaleX(0.9384);transform-origin:0 0;">Floor Plan</span>
<span class="t" style="left:292.80px;top:667.00px;font-size:18.0px;color:#565c64;transform:scaleX(0.9206);transform-origin:0 0;">3F FLOOR PLAN</span>
<span class="t" style="left:831.70px;top:415.00px;font-size:15.0px;color:#565c64;transform:scaleX(0.9908);transform-origin:0 0;">2F FLOOR PLAN</span>
<span class="t" style="left:833.50px;top:633.00px;font-size:15.0px;color:#565c64;transform:scaleX(0.9321);transform-origin:0 0;">4F FLOOR PLAN</span>
<span class="t" style="left:1062.50px;top:670.00px;font-size:13.0px;color:#9a9a9a;transform:scaleX(0.7143);transform-origin:0 0;">1</span>
<span class="t" style="left:108.58px;top:740.00px;font-size:13.0px;color:#8f98a2;transform:scaleX(0.9171);transform-origin:0 0;">BANQUET &amp; MEETING</span>
<span class="t" style="left:107.55px;top:787.00px;font-size:28.0px;color:#ffffff;font-weight:bold;transform:scaleX(0.9502);transform-origin:0 0;">Room Dimensions and Seating Capacity</span>
<span class="t" style="left:76.00px;top:860.00px;font-size:15.0px;color:#1e1e1e;transform:scaleX(0.9519);transform-origin:0 0;">Options...</span>
<span class="t" style="left:811.00px;top:860.00px;font-size:15.0px;color:#1e1e1e;transform:scaleX(0.9102);transform-origin:0 0;">82.73%</span>
<span class="t" style="left:525.14px;top:862.00px;font-size:15.0px;color:#1e1e1e;transform:scaleX(0.8571);transform-origin:0 0;">1</span>
<span class="t" style="left:175.40px;top:858.00px;font-size:10.0px;color:#1e1e1e;transform:scaleX(1.1601);transform-origin:0 0;">W: 960.00pt</span>
<span class="t" style="left:175.80px;top:867.00px;font-size:10.0px;color:#1e1e1e;transform:scaleX(1.1370);transform-origin:0 0;">H : 540.00pt</span>
<span class="t" style="left:263.70px;top:858.00px;font-size:10.0px;color:#1e1e1e;transform:scaleX(1.1191);transform-origin:0 0;">X : 508.56pt</span>
<span class="t" style="left:263.70px;top:867.00px;font-size:10.0px;color:#1e1e1e;transform:scaleX(1.1191);transform-origin:0 0;">Y : 539.09pt</span>
<span class="t" style="left:976.60px;top:696.00px;font-size:15.0px;color:#3a3f47;transform-origin:0 0;">Distance Tool</span>
<span class="t" style="left:961.01px;top:725.00px;font-size:15.0px;color:#6a6e74;transform:scaleX(0.9940);transform-origin:0 0;">Distance:</span>
<span class="t" style="left:980.40px;top:745.00px;font-size:15.0px;color:#6a6e74;transform:scaleX(1.0057);transform-origin:0 0;">Angle:</span>
<span class="t" style="left:1000.40px;top:764.00px;font-size:15.0px;color:#6a6e74;transform:scaleX(0.9381);transform-origin:0 0;">ΔX:</span>
<span class="t" style="left:1000.40px;top:784.00px;font-size:15.0px;color:#6a6e74;transform:scaleX(0.9731);transform-origin:0 0;">ΔY:</span>
<span class="t" style="left:945.00px;top:804.00px;font-size:15.0px;color:#6a6e74;transform:scaleX(0.9660);transform-origin:0 0;">Scale Ratio:</span>
<span class="t" style="left:959.03px;top:824.00px;font-size:15.0px;color:#6a6e74;transform:scaleX(0.9734);transform-origin:0 0;">Precision:</span>
<span class="t" style="left:1028.47px;top:804.00px;font-size:15.0px;color:#1e1e1e;transform:scaleX(1.0272);transform-origin:0 0;">1 pt = 1 ft</span>
<span class="t" style="left:1029.50px;top:824.00px;font-size:15.0px;color:#1e1e1e;transform:scaleX(0.8318);transform-origin:0 0;">0.01</span>
</body></html>
